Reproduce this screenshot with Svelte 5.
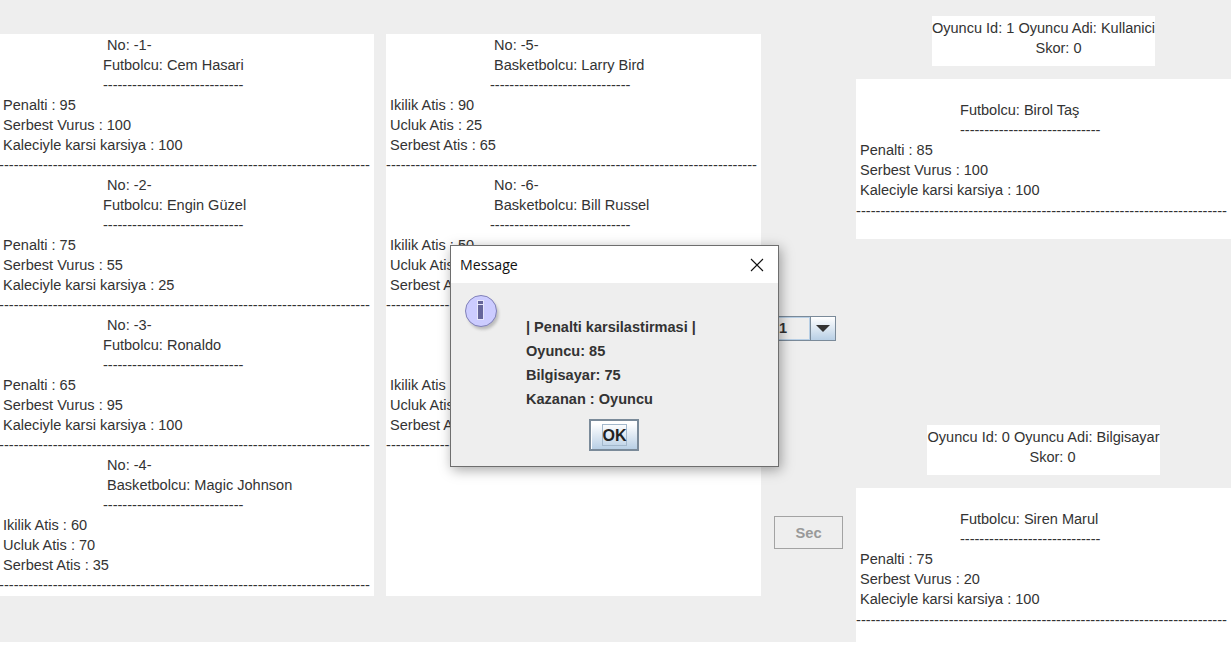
<script lang="ts">
    const shortDash = "-".repeat(29);
    const longDash = "-".repeat(76);

    const foot = (name, a, b, c) => ({
        type: "Futbolcu",
        name,
        stats: [`Penalti : ${a}`, `Serbest Vurus : ${b}`, `Kaleciyle karsi karsiya : ${c}`]
    });
    const bask = (name, a, b, c) => ({
        type: "Basketbolcu",
        name,
        stats: [`Ikilik Atis : ${a}`, `Ucluk Atis : ${b}`, `Serbest Atis : ${c}`]
    });

    const columnOne = [
        { no: 1, ...foot("Cem Hasari", 95, 100, 100) },
        { no: 2, ...foot("Engin Güzel", 75, 55, 25) },
        { no: 3, ...foot("Ronaldo", 65, 95, 100) },
        { no: 4, ...bask("Magic Johnson", 60, 70, 35), pad: true }
    ];
    const columnTwo = [
        { no: 5, ...bask("Larry Bird", 90, 25, 65), pad: true },
        { no: 6, ...bask("Bill Russel", 50, 80, 40), pad: true },
        { no: 7, ...bask("Kobe Bryant", 70, 85, 75), pad: true }
    ];
    const columns = [columnOne, columnTwo];

    const userCard = foot("Birol Taş", 85, 100, 100);
    const cpuCard = foot("Siren Marul", 75, 20, 100);
</script>

<div class="frame">
    {#each columns as cards, i}
        <div class="list" class:first={i === 0}>
            {#each cards as card}
                <div class="head">&nbsp;No: -{card.no}-</div>
                <div class="head">{card.pad ? "\u00a0" : ""}{card.type}: {card.name}</div>
                <div class="head dash short">{shortDash}</div>
                {#each card.stats as s}
                    <div class="stat">{s}</div>
                {/each}
                <div class="dash">{longDash}</div>
            {/each}
        </div>
    {/each}

    <div class="controls">
        <div class="combo">
            <div class="combo-value">1</div>
            <div class="combo-arrow"><span class="tri"></span></div>
        </div>
        <button class="sec" disabled>Sec</button>
    </div>

    <div class="side">
        <div class="score">Oyuncu Id: 1 Oyuncu Adi: Kullanici<div class="skor">Skor: 0</div></div>
        <div class="picked">
            <div class="head">{userCard.type}: {userCard.name}</div>
            <div class="head dash short">{shortDash}</div>
            {#each userCard.stats as s}
                <div class="stat">{s}</div>
            {/each}
            <div class="rule dash">{longDash}</div>
        </div>

        <div class="score cpu">Oyuncu Id: 0 Oyuncu Adi: Bilgisayar<div class="skor">Skor: 0</div></div>
        <div class="picked last">
            <div class="head">{cpuCard.type}: {cpuCard.name}</div>
            <div class="head dash short">{shortDash}</div>
            {#each cpuCard.stats as s}
                <div class="stat">{s}</div>
            {/each}
            <div class="rule dash">{longDash}</div>
        </div>
    </div>

    <div class="dialog">
        <div class="titlebar">
            <span>Message</span>
            <svg width="14" height="14" viewBox="0 0 14 14">
                <path d="M1 1 L13 13 M13 1 L1 13" stroke="#111" stroke-width="1.1" fill="none" />
            </svg>
        </div>
        <div class="body">
            <svg class="info" width="36" height="38" viewBox="0 0 36 38">
                <defs>
                    <filter id="soft" x="-30%" y="-30%" width="160%" height="160%">
                        <feGaussianBlur stdDeviation="1.6" />
                    </filter>
                </defs>
                <circle cx="18" cy="19" r="15.5" fill="#999" opacity="0.6" filter="url(#soft)" />
                <circle cx="16" cy="16" r="15.5" fill="#ccccff" stroke="#8080b8" stroke-width="1" />
                <rect x="12" y="5" width="7" height="20" fill="#e6e6fa" />
                <rect x="13" y="6" width="5" height="3" fill="#66669a" />
                <rect x="13" y="10" width="5" height="14" fill="#66669a" />
            </svg>
            <div class="message">
                <div>| Penalti karsilastirmasi |</div>
                <div>Oyuncu: 85</div>
                <div>Bilgisayar: 75</div>
                <div>Kazanan : Oyuncu</div>
            </div>
            <button class="ok"><span>OK</span></button>
        </div>
    </div>
</div>

<style>
    :global(body) {
        background: #fff;
    }
    .frame {
        position: relative;
        display: flex;
        height: 642px;
        width: 1231px;
        overflow: hidden;
        background: #eeeeee;
        font-family: "Liberation Sans", Arial, sans-serif;
        font-size: 14.55px;
        line-height: 20px;
        color: #333;
        white-space: nowrap;
    }
    .list {
        width: 375px;
        height: 560px;
        margin-top: 34px;
        padding: 1px 0;
        background: #fff;
        overflow: hidden;
    }
    .list.first {
        margin-left: -1px;
        margin-right: 12px;
    }
    .head {
        padding-left: 104px;
    }
    .stat {
        padding-left: 4px;
    }
    .dash {
        font-size: 14.67px;
    }
    .dash.short {
        letter-spacing: -0.04px;
    }
    .controls {
        width: 82px;
        padding: 316px 0 0 13px;
    }
    .combo {
        display: flex;
        width: 62px;
        height: 25px;
        box-sizing: border-box;
        border: 1px solid #7a8a99;
        background: #eee;
    }
    .combo-value {
        flex: 1;
        border: 1px solid #b8cfe5;
        padding-left: 3px;
        font-weight: bold;
        line-height: 21px;
    }
    .combo-arrow {
        display: flex;
        align-items: center;
        justify-content: center;
        width: 24px;
        border-left: 1px solid #7a8a99;
        background: linear-gradient(#fff, #b8cfe5);
    }
    .tri {
        width: 0;
        height: 0;
        border-left: 7px solid transparent;
        border-right: 7px solid transparent;
        border-top: 7px solid #333;
    }
    .sec {
        display: block;
        width: 69px;
        height: 33px;
        margin-top: 175px;
        padding: 1px 0 0;
        border: 1px solid #a3a3a3;
        background: #eee;
        color: #999;
        font: bold 14.67px "Liberation Sans", Arial, sans-serif;
    }
    .side {
        display: flex;
        flex-direction: column;
        flex: 1;
        padding-top: 16px;
        min-width: 0;
    }
    .score {
        align-self: center;
        box-sizing: border-box;
        height: 50px;
        background: #fff;
        text-align: center;
        padding-top: 2px;
    }
    .skor {
        padding-left: 30px;
    }
    .score.cpu {
        margin-top: 186px;
    }
    .score.cpu .skor {
        padding-left: 18px;
    }
    .picked {
        margin-top: 13px;
        height: 160px;
        box-sizing: border-box;
        padding-top: 21px;
        background: #fff;
    }
    .picked.last {
        flex: 1;
        height: auto;
    }
    .rule {
        margin-top: 1px;
    }
    .dialog {
        position: absolute;
        left: 450px;
        top: 245px;
        width: 329px;
        height: 222px;
        box-sizing: border-box;
        border: 1px solid #6e6e6e;
        background: #eee;
        box-shadow: 2px 3px 12px rgba(0, 0, 0, 0.35);
        display: flex;
        flex-direction: column;
    }
    .titlebar {
        display: flex;
        align-items: center;
        justify-content: space-between;
        height: 37px;
        padding: 0 14px 0 9px;
        background: #fff;
        color: #111;
        font-family: "Open Sans", sans-serif;
        font-size: 14.2px;
        flex: none;
    }
    .body {
        position: relative;
        flex: 1;
    }
    .info {
        position: absolute;
        left: 14px;
        top: 12px;
    }
    .message {
        padding: 32px 0 0 75px;
        font-weight: bold;
        line-height: 24px;
    }
    .ok {
        position: absolute;
        left: 138px;
        top: 136px;
        width: 50px;
        height: 32px;
        padding: 0;
        display: flex;
        align-items: center;
        justify-content: center;
        border: 2px solid #7a8a99;
        box-shadow: inset 1px 0 0 #fff;
        background: linear-gradient(#fff 10%, #b8cfe5);
        font: bold 16px "Liberation Sans", Arial, sans-serif;
        color: #222;
    }
    .ok span {
        display: block;
        box-sizing: border-box;
        width: 25px;
        height: 22px;
        border: 1px solid #a3b8cc;
        line-height: 21px;
        text-align: center;
    }
</style>
